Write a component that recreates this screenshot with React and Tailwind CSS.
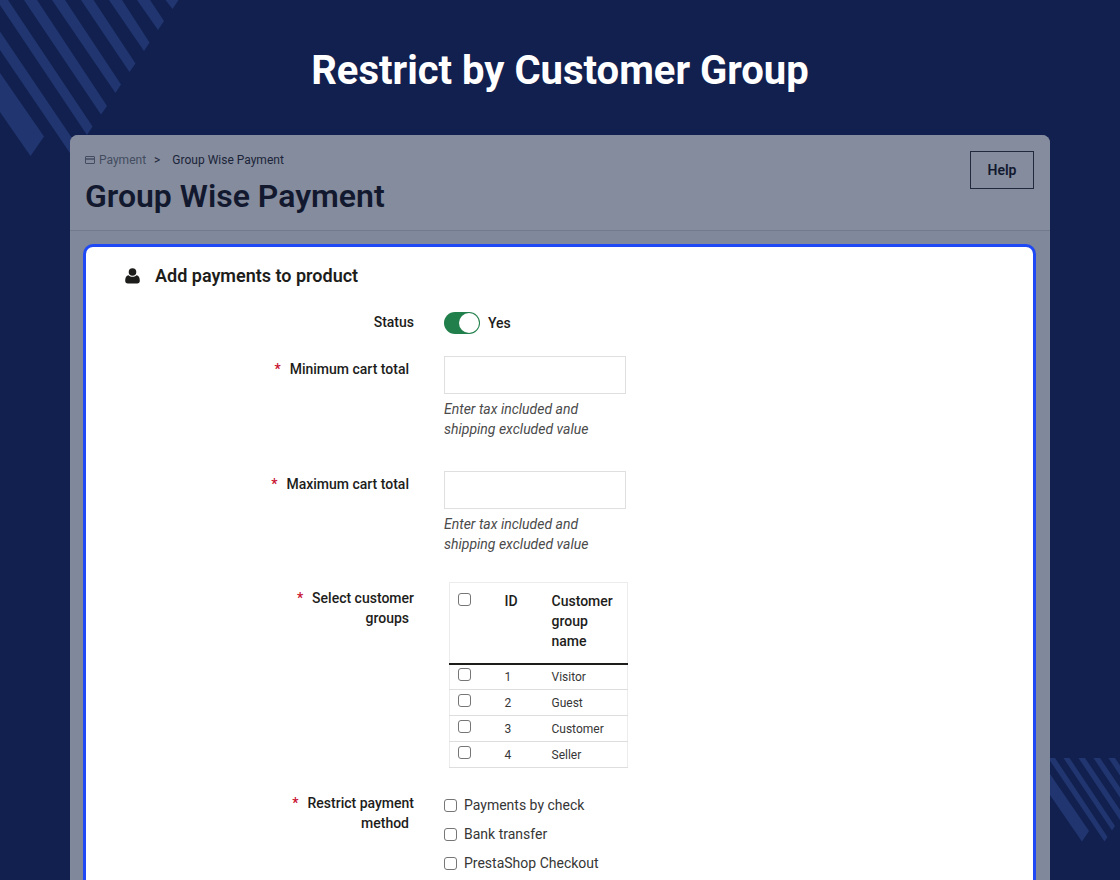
import React, { useState } from 'react';

const GROUPS = [
  { id: 1, name: 'Visitor' },
  { id: 2, name: 'Guest' },
  { id: 3, name: 'Customer' },
  { id: 4, name: 'Seller' },
];

const METHODS = ['Payments by check', 'Bank transfer', 'PrestaShop Checkout'];

const checkboxClass =
  'block size-[13px] shrink-0 appearance-none rounded-[3px] border border-[#767676] bg-white checked:border-[#217f4b] checked:bg-[#217f4b]';

function StripesTop() {
  return (
    <svg className="absolute left-0 top-0" width="180" height="160" viewBox="0 0 180 160" fill="#213670" aria-hidden="true">
      <path d="M0 73L44 136.5L30.5 156L0 112Z" />
      <path d="M0 31.5L78 147L72 156L0 50Z" />
      <path d="M0 0H8L92.5 126.5L87 135L0 5Z" />
      <path d="M24 0H37L107 106L101 114.5Z" />
      <path d="M52 0H65L121 84.5L115.5 93Z" />
      <path d="M81 0H93.5L135.5 63.5L129.5 72Z" />
      <path d="M109 0H122L149.5 42.5L144 51Z" />
      <path d="M137 0H150L164 21L158 30Z" />
      <path d="M165.5 0H178.5L172.5 9Z" />
    </svg>
  );
}

function StripesBottom() {
  return (
    <svg className="absolute bottom-[36px] right-0" width="70" height="86" viewBox="0 0 70 86" fill="#213670" aria-hidden="true">
      <path d="M0 16L39 73L32 83.5L0 37Z" />
      <path d="M0 0H5L57.5 79L54.5 83.5L0 2.7Z" />
      <path d="M13.5 0H19.5L65 68L62 72.5Z" />
      <path d="M28.5 0H35L70 52V62Z" />
      <path d="M43.5 0H50L70 29.5V39.5Z" />
      <path d="M58.5 0H65L70 7.5V17.5Z" />
    </svg>
  );
}

function UserIcon() {
  return (
    <svg width="15" height="16" viewBox="0 0 15 16" fill="currentColor" aria-hidden="true">
      <circle cx="7.5" cy="4" r="3.8" />
      <path d="M3.6 7.2C1.100 7.400 0.200 9.800 0.200 12.800C0.200 14.600 1.200 15.600 2.800 15.600H12.200C13.800 15.600 14.800 14.600 14.800 12.800C14.800 9.800 13.900 7.400 11.400 7.200C10.400 8.200 9 8.800 7.500 8.800C6 8.800 4.600 8.200 3.600 7.200Z" />
    </svg>
  );
}

function Required() {
  return <span className="mr-[9px] text-[#c8102e]">*</span>;
}

function FormRow({ label, htmlFor, required, children }) {
  return (
    <div className="flex gap-[30px] pl-[178px]">
      <label htmlFor={htmlFor} className="w-[150px] shrink-0 pt-[3px] text-right text-sm font-medium">
        {required && <Required />}
        <span className="mr-[5px]">{label}</span>
      </label>
      {children}
    </div>
  );
}

// Same layout as FormRow, but for a set of check boxes
function GroupRow({ id, label, children }) {
  return (
    <div role="group" aria-labelledby={id} className="flex gap-[30px] pl-[178px]">
      <div id={id} className="w-[150px] shrink-0 pt-[6px] text-right text-sm font-medium">
        <Required />
        <span className="mr-[5px]">{label}</span>
      </div>
      {children}
    </div>
  );
}

function CartField({ id, label }) {
  return (
    <FormRow label={label} htmlFor={id} required>
      <div className="w-[182px]">
        <input id={id} type="text" className="block h-[38px] w-full border border-[#dfdfdf] bg-white px-3 text-sm" />
        <p className="mt-[5px] text-sm italic text-[#4b4b4b]">Enter tax included and shipping excluded value</p>
      </div>
    </FormRow>
  );
}

export default function App() {
  const [enabled, setEnabled] = useState(true);
  const [selected, setSelected] = useState([]);

  const toggleGroup = (id) => {
    setSelected(selected.includes(id) ? selected.filter((g) => g !== id) : [...selected, id]);
  };

  const toggleAll = () => {
    setSelected(selected.length === GROUPS.length ? [] : GROUPS.map((g) => g.id));
  };

  return (
    <div className="relative flex min-h-screen flex-col bg-[#12204f] px-[70px] font-['Roboto',sans-serif] text-[#1d1d1b]">
      <StripesTop />
      <StripesBottom />

      <h1 className="relative pb-10 pt-[47px] text-center text-[40px] font-bold leading-[48px] text-white">
        Restrict by Customer Group
      </h1>

      <main className="relative flex flex-1 flex-col rounded-t-[8px] bg-[#80889b]">
        <header className="flex h-24 items-start justify-between rounded-t-[8px] border-b border-[#727a8d] bg-[#858c9e] px-4 pt-4">
          <div className="-ml-px pt-px">
            <nav className="flex items-center text-xs text-[#1b2438]">
              <a href="#payment" className="flex items-center gap-1 text-[#434c60]">
                <svg width="10" height="8" viewBox="0 0 10 8" fill="none" stroke="currentColor" aria-hidden="true">
                  <rect x="0.5" y="0.5" width="9" height="7" rx="0.5" />
                  <path d="M0 3H10" strokeWidth="1.5" />
                </svg>
                Payment
              </a>
              <span className="mx-2">&gt;</span>
              <span className="ml-1">Group Wise Payment</span>
            </nav>
            <h2 className="mt-2 text-[32px] font-semibold leading-[40px] text-[#12192f]">Group Wise Payment</h2>
          </div>
          <button type="button" className="h-[38px] w-16 border border-[#20293d] text-sm font-semibold text-[#12192f]">
            Help
          </button>
        </header>

        <section className="ml-[13px] mr-[14px] mt-[13px] flex-1 rounded-t-[10px] border-[3px] border-b-0 border-[#1f49f5] bg-white">
          <h3 className="flex items-center gap-[15px] pl-[39px] pt-4 text-lg font-semibold leading-[26px]">
            <UserIcon />
            Add payments to product
          </h3>

          <form className="mt-[22px]">
            <div className="flex gap-[30px] pl-[178px]">
              <label htmlFor="status" className="w-[150px] shrink-0 pt-px text-right text-sm font-medium">
                Status
              </label>
              <div className="flex items-center gap-2 pt-px text-sm font-medium">
                <input
                  id="status"
                  type="checkbox"
                  role="switch"
                  checked={enabled}
                  onChange={(e) => setEnabled(e.target.checked)}
                  className="flex h-[22px] w-9 appearance-none items-center rounded-full bg-gray-400 px-px before:size-5 before:rounded-full before:bg-white checked:justify-end checked:bg-[#217f4b]"
                />
                <span>{enabled ? 'Yes' : 'No'}</span>
              </div>
            </div>

            <div className="mt-[22px] flex flex-col gap-8">
              <CartField id="min-total" label="Minimum cart total" />
              <CartField id="max-total" label="Maximum cart total" />
            </div>

            <div className="mt-7">
              <GroupRow id="groups-label" label="Select customer groups">
                <table className="ml-[5px] w-[179px] table-fixed border-collapse border border-[#ececec] text-left">
                  <thead>
                    <tr className="h-[81px] border-b-2 border-[#1d1d1b] align-top text-sm font-medium">
                      <th className="w-[55px] pl-2 pt-[10px]">
                        <input
                          type="checkbox"
                          aria-label="Select all"
                          checked={selected.length === GROUPS.length}
                          onChange={toggleAll}
                          className={checkboxClass}
                        />
                      </th>
                      <th className="w-[47px] pt-2 font-medium">ID</th>
                      <th className="pr-2 pt-2 font-medium">Customer group name</th>
                    </tr>
                  </thead>
                  <tbody>
                    {GROUPS.map((group) => (
                      <tr key={group.id} className="h-[26px] border-b border-[#dedede] text-xs text-[#363636]">
                        <td className="pb-1 pl-2">
                          <input
                            type="checkbox"
                            aria-label={group.name}
                            checked={selected.includes(group.id)}
                            onChange={() => toggleGroup(group.id)}
                            className={checkboxClass}
                          />
                        </td>
                        <td>{group.id}</td>
                        <td>{group.name}</td>
                      </tr>
                    ))}
                  </tbody>
                </table>
              </GroupRow>
            </div>

            <div className="mt-[19px]">
              <GroupRow id="methods-label" label="Restrict payment method">
                <div className="flex flex-col gap-[9px] pt-2 text-sm text-[#363636]">
                  {METHODS.map((method) => (
                    <label key={method} className="flex items-center gap-[7px]">
                      <input type="checkbox" className={checkboxClass} />
                      {method}
                    </label>
                  ))}
                </div>
              </GroupRow>
            </div>
          </form>
        </section>
      </main>
    </div>
  );
}
